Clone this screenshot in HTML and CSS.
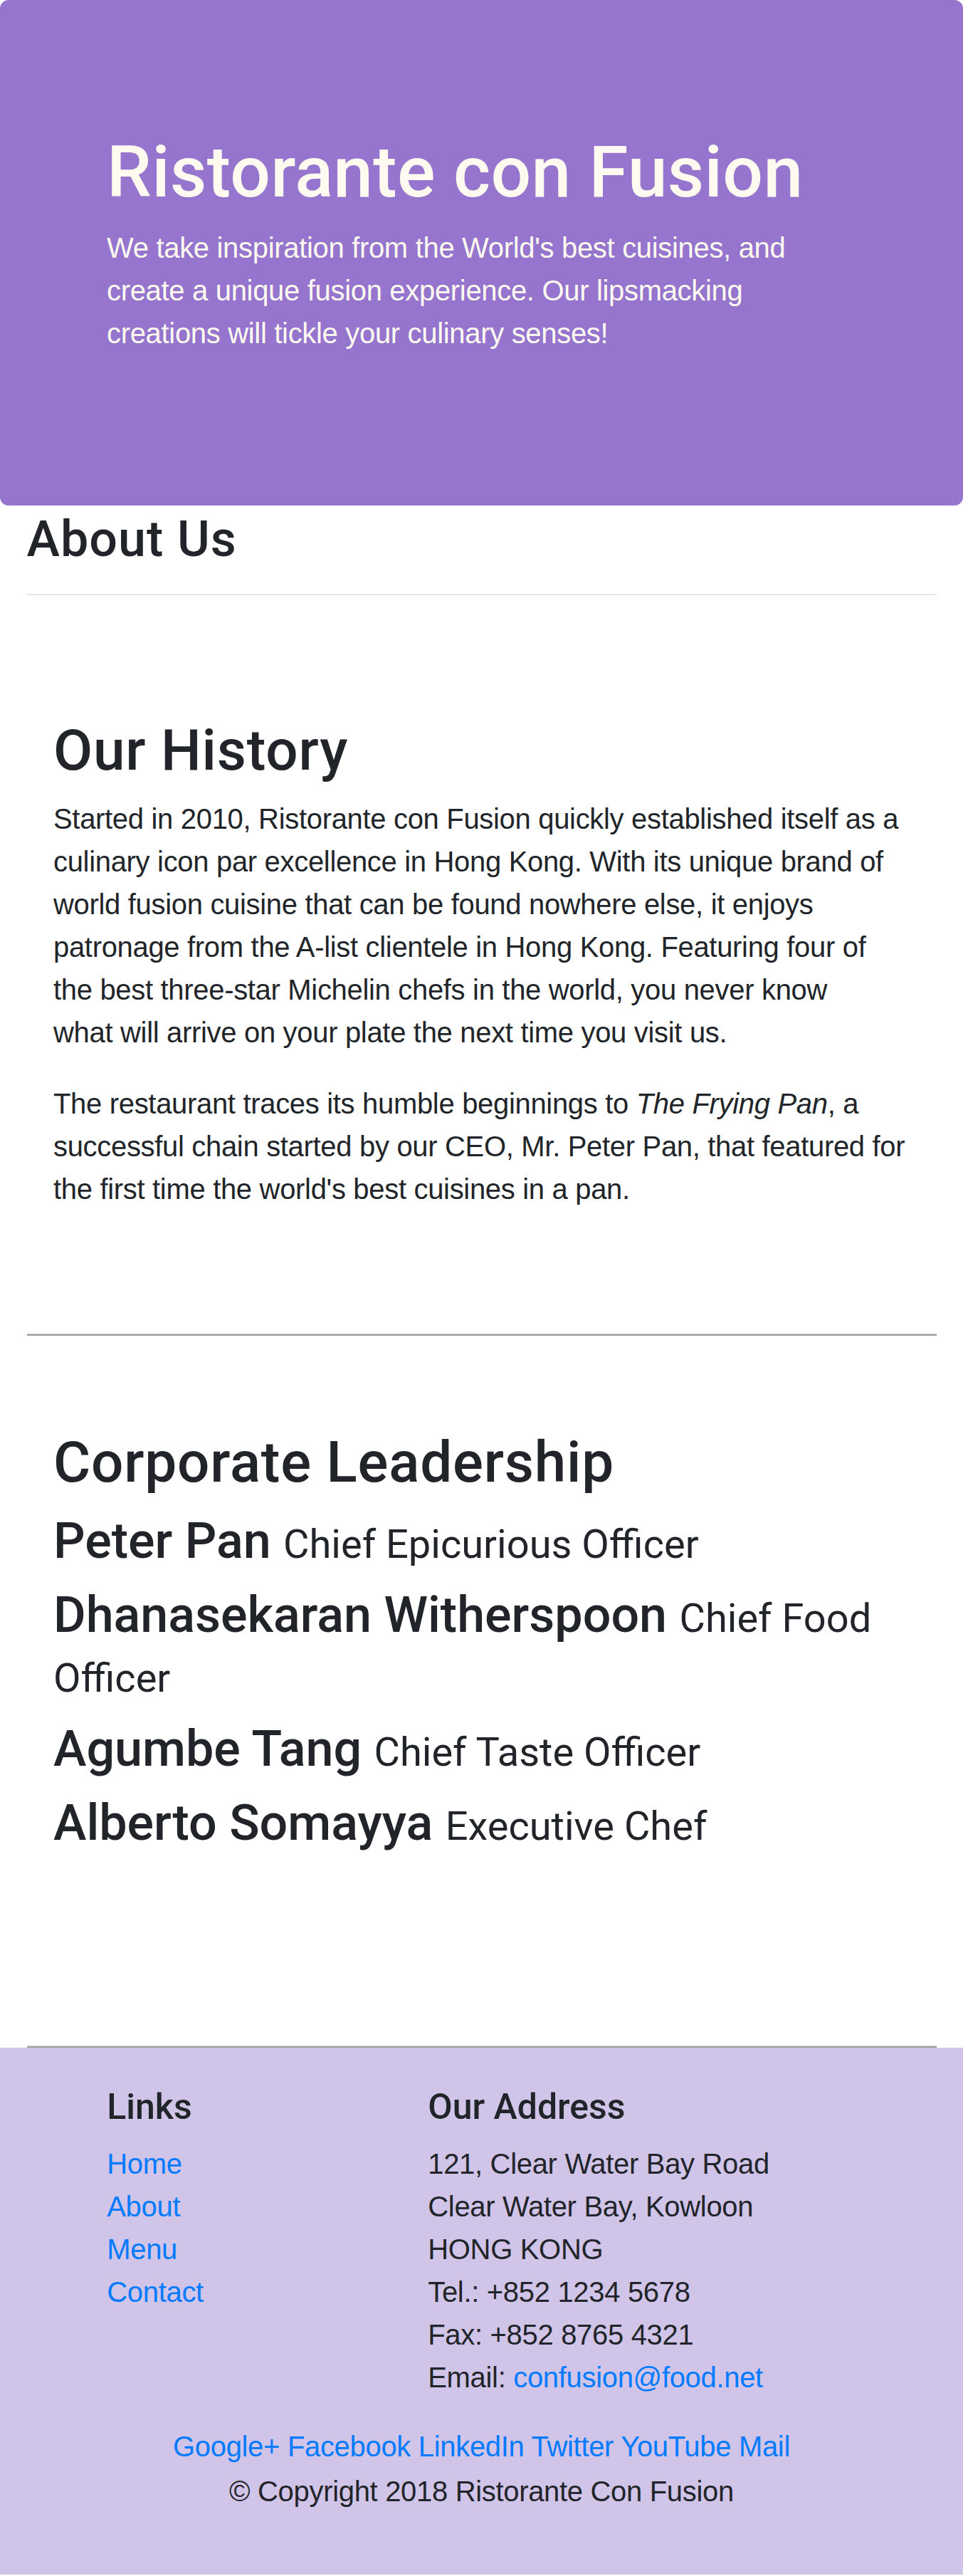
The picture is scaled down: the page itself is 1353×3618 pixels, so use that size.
FILE: index.html
```html
<!DOCTYPE html>
<html lang="en">
<head>
<meta charset="utf-8">
<title>Ristorante Con Fusion: About Us</title>
<link rel="stylesheet" href="styles.css">
</head>
<body>
<header class="jumbotron">
  <div class="container">
    <div class="row row-header">
      <div class="col col-12">
        <h1>Ristorante con Fusion</h1>
        <p>We take inspiration from the World's best cuisines, and create a unique fusion experience. Our lipsmacking creations will tickle your culinary senses!</p>
      </div>
    </div>
  </div>
</header>

<div class="container">
  <div class="row">
    <div class="col col-12">
      <h3 class="page-title">About Us</h3>
      <hr>
    </div>
  </div>

  <div class="row row-content">
    <div class="col col-12">
      <h2>Our History</h2>
      <p>Started in 2010, Ristorante con Fusion quickly established itself as a culinary icon par excellence in Hong Kong. With its unique brand of world fusion cuisine that can be found nowhere else, it enjoys patronage from the A-list clientele in Hong Kong. Featuring four of the best three-star Michelin chefs in the world, you never know what&nbsp;will arrive on your plate the next time you visit us.</p>
      <p>The restaurant traces its humble beginnings to <em>The Frying Pan</em>, a successful chain started by our CEO, Mr. Peter Pan, that featured for the first time the world's best cuisines in a pan.</p>
    </div>
  </div>

  <div class="row row-content">
    <div class="col col-12">
      <h2>Corporate Leadership</h2>
      <h3>Peter Pan <small>Chief Epicurious Officer</small></h3>
      <h3>Dhanasekaran Witherspoon <small>Chief Food Officer</small></h3>
      <h3>Agumbe Tang <small>Chief Taste Officer</small></h3>
      <h3>Alberto Somayya <small>Executive Chef</small></h3>
    </div>
  </div>
</div>

<footer class="footer">
  <div class="container">
    <div class="row">
      <div class="col col-4 offset-1">
        <h5>Links</h5>
        <ul class="list-unstyled">
          <li><a href="#">Home</a></li>
          <li><a href="#">About</a></li>
          <li><a href="#">Menu</a></li>
          <li><a href="#">Contact</a></li>
        </ul>
      </div>
      <div class="col col-7">
        <h5>Our Address</h5>
        <address>
          121, Clear Water Bay Road<br>
          Clear Water Bay, Kowloon<br>
          HONG KONG<br>
          Tel.: +852 1234 5678<br>
          Fax: +852 8765 4321<br>
          Email: <a href="mailto:confusion@food.net">confusion@food.net</a>
        </address>
      </div>
      <div class="col col-12">
        <div class="text-center">
          <a href="#">Google+</a>
          <a href="#">Facebook</a>
          <a href="#">LinkedIn</a>
          <a href="#">Twitter</a>
          <a href="#">YouTube</a>
          <a href="#">Mail</a>
        </div>
      </div>
    </div>
    <div class="row row-center">
      <div class="col col-auto">
        <p>© Copyright 2018 Ristorante Con Fusion</p>
      </div>
    </div>
  </div>
</footer>
</body>
</html>
```

FILE: styles.css
```css
*,
*::before,
*::after {
  box-sizing: border-box;
}

html {
  font-size: 40px;
}

body {
  margin: 0;
  font-family: "Liberation Sans", Arial, sans-serif;
  font-size: 40px;
  font-weight: 400;
  line-height: 1.5;
  letter-spacing: -0.008em;
  color: #212529;
  background-color: #fff;
}

h1, h2, h3, h5 {
  margin: 0 0 calc(20px - 0.07em) 0;
  padding-top: 0.07em;
  font-family: Roboto, "Liberation Sans", Arial, sans-serif;
  font-weight: 500;
  line-height: 1.2;
  letter-spacing: 0;
}

h1 { font-size: 100px; letter-spacing: 0.003em; }
h2 { font-size: 80px; letter-spacing: 0.01em; }
h3 { font-size: 70px; }
h5 { font-size: 50px; }

.page-title {
  letter-spacing: 0.015em;
}

small {
  font-size: 80%;
  font-weight: 400;
}

p {
  margin: 0 0 37px 0;
  padding-top: 3px;
}

a {
  color: #007bff;
  text-decoration: none;
}

hr {
  box-sizing: content-box;
  height: 0;
  margin: 35px 0 40px 0;
  border: 0;
  border-top: 2px solid rgba(0, 0, 0, 0.1);
}

address {
  margin: 0 0 37px 0;
  padding-top: 3px;
  font-style: normal;
  line-height: inherit;
}

.container {
  width: 100%;
  padding: 0 37.5px;
}

.row {
  display: flex;
  flex-wrap: wrap;
  margin: 0 -37.5px;
}

.col {
  position: relative;
  width: 100%;
  padding: 0 37.5px;
}

.col-12 { flex: 0 0 100%; max-width: 100%; }
.col-7 { flex: 0 0 58.333333%; max-width: 58.333333%; }
.col-4 { flex: 0 0 33.333333%; max-width: 33.333333%; }
.col-auto { flex: 0 0 auto; width: auto; max-width: 100%; }
.offset-1 { margin-left: 8.333333%; }

.row-center {
  justify-content: center;
}

.text-center {
  text-align: center;
}

.list-unstyled {
  padding: 3px 0 0 0;
  list-style: none;
  margin: 0 0 37px 0;
}

/* page specific */
.jumbotron {
  margin: 0 auto;
  padding: 175px 75px;
  background: #9575CD;
  color: #FFFAF0;
  border-radius: 12px;
}

.row-header {
  margin: 0 auto;
  padding: 0;
}

.row-content {
  margin: 0 auto;
  padding: 125px 0;
  min-height: 1000px;
  border-bottom: 2px solid #9d9d9d;
  box-shadow: inset 0 -1px 0 #d4d4d4;
}

.footer {
  margin: 0 auto;
  padding: 50px 0;
  background-color: #D1C4E9;
}
```
